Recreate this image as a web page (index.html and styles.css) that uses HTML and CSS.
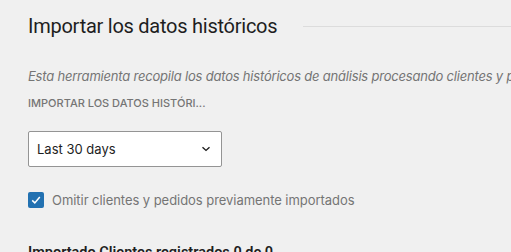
FILE: index.html
```html
<!DOCTYPE html>
<html lang="es">
<head>
    <meta charset="UTF-8">
    <meta name="viewport" content="width=device-width, initial-scale=1.0">
    <title>Importar los datos históricos</title>
    <link rel="stylesheet" href="styles.css">
</head>
<body>

    <!-- Import section -->
    <div class="section">
        <div class="section-header">
            <h2>Importar los datos históricos</h2>
            <span class="rule"></span>
        </div>

        <p class="description">Esta herramienta recopila los datos históricos de análisis procesando clientes y pedidos creados antes de activar WooCommerce Analytics.</p>

        <label class="field-label" for="period">Importar los datos histórI...</label>
        <div class="select-wrap">
            <select id="period" class="select">
                <option>Last 30 days</option>
                <option>Last 90 days</option>
                <option>All</option>
            </select>
            <svg class="chevron" width="10" height="6" viewBox="0 0 10 6">
                <path d="M1.5 1.2 L5 4.4 L8.5 1.2" fill="none" stroke="#1e1e1e" stroke-width="1.4"/>
            </svg>
        </div>

        <label class="checkbox-row">
            <span class="checkbox">
                <svg width="12" height="12" viewBox="0 0 12 12">
                    <path d="M2.2 6.4 L4.8 8.9 L9.8 2.9" fill="none" stroke="white" stroke-width="1.5"/>
                </svg>
            </span>
            <span class="checkbox-text">Omitir clientes y pedidos previamente importados</span>
        </label>

        <h3 class="status">Importado Clientes registrados 0 de 0</h3>
    </div>

</body>
</html>
```

FILE: styles.css
```css
body {
    font-family: Inter, "Noto Sans", sans-serif;
    background-color: #f0f0f0;
    color: #1e1e1e;
    margin: 0;
    padding: 0;
    overflow: hidden;
}

.section {
    padding: 13px 0 0 28px;
}

.section-header {
    display: flex;
    align-items: center;
    gap: 26px;
}

.section-header h2 {
    margin: 0;
    font-family: Roboto, sans-serif;
    font-size: 20px;
    font-weight: 400;
    letter-spacing: -0.25px;
    line-height: 26px;
    white-space: nowrap;
}

.rule {
    flex: 1;
    height: 1px;
    background: #dcdcdc;
}

.description {
    margin: 28px 0 0;
    font-size: 13px;
    font-style: italic;
    letter-spacing: -0.2px;
    color: #757575;
    line-height: 18px;
    white-space: nowrap;
}

.field-label {
    display: block;
    margin-top: 10px;
    font-size: 11px;
    font-weight: 500;
    text-transform: uppercase;
    color: #757575;
    line-height: 16px;
}

.select-wrap {
    position: relative;
    width: 194px;
    margin-top: 20px;
}

.select {
    appearance: none;
    width: 100%;
    height: 36px;
    padding: 0 30px 0 8px;
    border: 1px solid #949494;
    border-radius: 2px;
    background: white;
    font-family: inherit;
    font-size: 13px;
    color: #1e1e1e;
}

.chevron {
    position: absolute;
    right: 11px;
    top: 15px;
}

.checkbox-row {
    display: flex;
    align-items: center;
    gap: 8px;
    margin-top: 25px;
}

.checkbox {
    display: flex;
    align-items: center;
    justify-content: center;
    width: 16px;
    height: 16px;
    border-radius: 2px;
    background: #2271b1;
}

.checkbox-text {
    font-size: 13px;
    letter-spacing: -0.05px;
    color: #757575;
}

.status {
    margin: 36px 0 0;
    font-family: Roboto, sans-serif;
    font-size: 14.5px;
    font-weight: 600;
}
```
